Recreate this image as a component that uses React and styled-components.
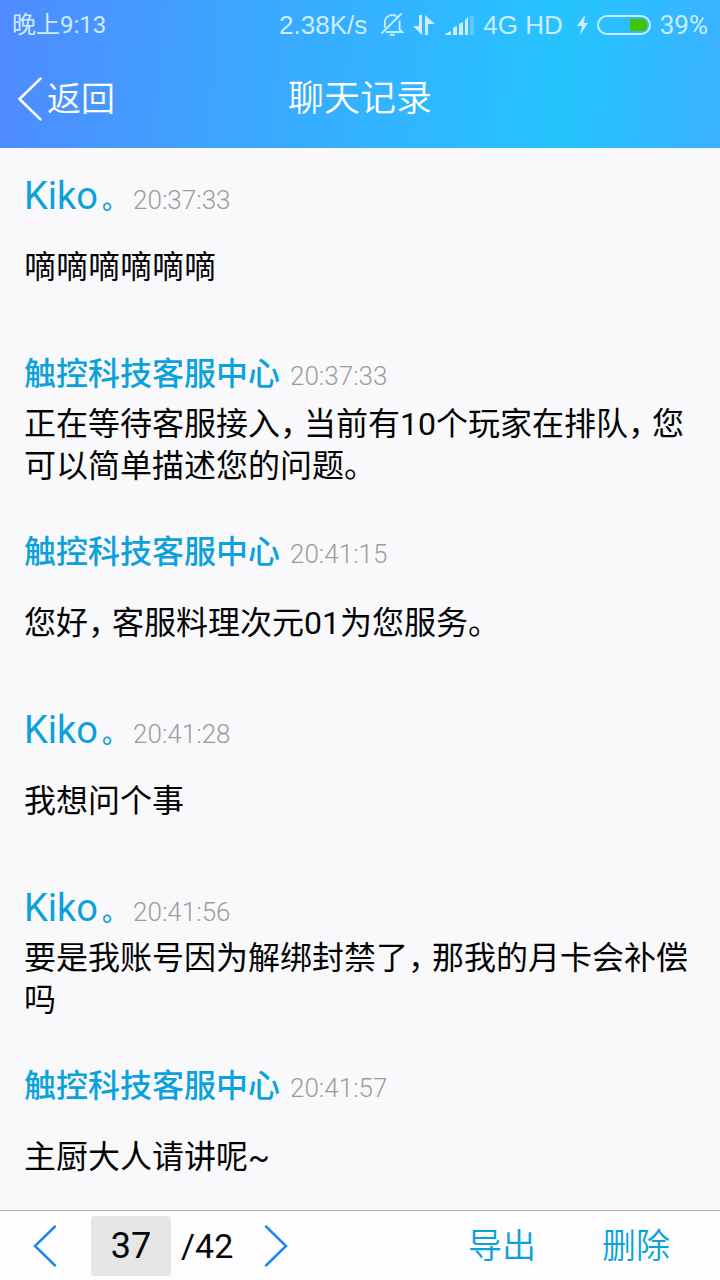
import React, { useState } from 'react'
import styled, { createGlobalStyle } from 'styled-components'

const colors = {
    background: '#f9f9fc',
    footer: '#fdfdfe',
    name: '#0ba2dc',
    time: '#9c9c9f',
    text: '#050505',
    status: '#cdecff',
    arrow: '#2583f5',
    line: '#b4b4b6',
    field: '#e6e6e6',
}

const GlobalStyle = createGlobalStyle`
    * {
        box-sizing: border-box;
    }
    body {
        margin: 0;
        background: ${colors.background};
        color: ${colors.text};
        font-family: Roboto, 'Noto Sans CJK SC', sans-serif;
    }
    button, input {
        font-family: inherit;
        border: none;
        padding: 0;
        margin: 0;
    }
    button {
        background: none;
        cursor: pointer;
    }
    svg {
        display: block;
    }
`

const Page = styled.div`
    display: flex;
    flex-direction: column;
    min-height: 100vh;
`

const Header = styled.header`
    background: linear-gradient(95deg, #508aff 0%, #3ca6ff 33%, #25c4ff 78%, #3ab1ff 100%);
    color: #fff;
`

const StatusBar = styled.div`
    display: flex;
    align-items: center;
    justify-content: space-between;
    height: 50px;
    padding: 0 12px;
    color: ${colors.status};
`

const StatusGroup = styled.div`
    display: flex;
    align-items: center;
    gap: 9px;
`

const StatusText = styled.span`
    font-size: ${props => props.$size || 24}px;
    line-height: 32px;
    white-space: nowrap;
`

const NetworkText = styled(StatusText)`
    margin-right: 4px;
    font-family: 'Liberation Sans', sans-serif;
`

const TitleBar = styled.div`
    display: grid;
    grid-template-columns: 1fr auto 1fr;
    align-items: center;
    height: 98px;
    padding: 0 17px;
`

const Back = styled.button`
    display: flex;
    align-items: center;
    justify-self: start;
    gap: 4px;
    color: #fff;
    font-size: 34px;
    font-weight: 350;
    line-height: 44px;
`

const Title = styled.h1`
    margin: 0;
    font-size: 36px;
    font-weight: 350;
    line-height: 44px;
`

const Records = styled.main`
    display: flex;
    flex-direction: column;
    flex: 1;
    gap: 44px;
    padding: 27px 16px 8px 24px;
`

const Record = styled.article`
    display: flex;
    flex-direction: column;
    gap: 8px;
`

const RecordHead = styled.div`
    display: flex;
    align-items: baseline;
    gap: 10px;
    height: 42px;
    line-height: 42px;
`

const Name = styled.h2`
    margin: 0;
    color: ${colors.name};
    font-size: 32px;
    font-weight: 500;
`

const Latin = styled.span`
    font-size: 38px;
    font-weight: 400;
`

const Stop = styled.span`
    margin: 0 8px 0 4px;
    font-size: 26px;
    font-feature-settings: 'halt';
`

const Time = styled.time`
    color: ${colors.time};
    font-size: 26px;
    font-weight: 300;
`

const Body = styled.div`
    display: flex;
    align-items: center;
    min-height: 84px;
`

const Message = styled.p`
    margin: 0;
    font-size: 32px;
    line-height: 42px;
`

const Comma = styled.span`
    margin-right: 8px;
    font-feature-settings: 'halt';
`

const Footer = styled.footer`
    display: flex;
    align-items: center;
    justify-content: space-between;
    position: sticky;
    bottom: 0;
    height: 70px;
    padding: 0 50px 0 32px;
    border-top: 1px solid ${colors.line};
    background: ${colors.footer};
`

const Pager = styled.nav`
    display: flex;
    align-items: center;
`

const PageInput = styled.input`
    width: 80px;
    height: 60px;
    margin: 0 10px 0 33px;
    border-radius: 4px;
    background: ${colors.field};
    color: ${colors.text};
    font-size: 36px;
    text-align: center;
    outline: none;
`

const PageTotal = styled.span`
    margin-right: 30px;
    font-size: 34px;
`

const Actions = styled.div`
    display: flex;
    gap: 66px;
`

const Action = styled.button`
    color: ${colors.name};
    font-size: 34px;
    font-weight: 350;
    line-height: 44px;
`

const records = [
    { id: 1, latin: 'Kiko', time: '20:37:33', text: '嘀嘀嘀嘀嘀嘀' },
    { id: 2, name: '触控科技客服中心', time: '20:37:33', text: '正在等待客服接入，当前有10个玩家在排队，您可以简单描述您的问题。' },
    { id: 3, name: '触控科技客服中心', time: '20:41:15', text: '您好，客服料理次元01为您服务。' },
    { id: 4, latin: 'Kiko', time: '20:41:28', text: '我想问个事' },
    { id: 5, latin: 'Kiko', time: '20:41:56', text: '要是我账号因为解绑封禁了，那我的月卡会补偿吗' },
    { id: 6, name: '触控科技客服中心', time: '20:41:57', text: '主厨大人请讲呢~' },
]

const BellOff = () => (
    <svg width="24" height="26" viewBox="0 0 24 26" fill="none" stroke="currentColor" strokeWidth="1.8">
        <path d="M4.800 16V10.500a7.400 7.400 0 0 1 12.200-5.700M19.600 8.500v9l2.600 2.500H6" />
        <path d="M1.500 21.500L21.500 1.500" />
        <path d="M9.500 22.800h5.500" />
    </svg>
)

const DataArrows = () => (
    <svg width="22" height="22" viewBox="0 0 22 22" fill="currentColor">
        <path d="M6 1h3v20L0 12h6z" />
        <path d="M12 1l10 9h-7v11h-3z" />
    </svg>
)

const Signal = () => (
    <svg width="30" height="20" viewBox="0 0 30 20" fill="currentColor">
        <path d="M1 20v-1l6-3v4zM9 20v-7l4-2v9zM15 20V9l4-2v13zM21 20V5l3-3v18z" />
        <path d="M26 20V1l4-1v20z" opacity="0.3" />
    </svg>
)

const Bolt = () => (
    <svg width="12" height="20" viewBox="0 0 12 20" fill="currentColor">
        <path d="M9 0L1 11h5L4 20l8-12H8z" />
    </svg>
)

const Battery = () => (
    <svg width="54" height="20" viewBox="0 0 54 20">
        <rect x="1" y="1" width="52" height="18" rx="9" fill="none" stroke="currentColor" strokeWidth="2" />
        <path d="M33 4h13a4 6 0 0 1 0 12H33z" fill="#44c400" />
    </svg>
)

const Chevron = ({ width, height, right }) => (
    <svg width={width} height={height} viewBox="0 0 24 42" fill="none" stroke="currentColor" strokeWidth="2.500" strokeLinecap="round">
        <path d={right ? 'M2 1.500L22 21L2 40.500' : 'M22 1.500L2 21L22 40.500'} />
    </svg>
)

const Arrow = styled.button`
    color: ${colors.arrow};
`

const MessageText = ({ text }) => (
    <Message>
        {text.split('，').map((part, i) => (
            <React.Fragment key={i}>
                {i > 0 && <Comma>，</Comma>}
                {part}
            </React.Fragment>
        ))}
    </Message>
)

const App = () => {
    const [page, setPage] = useState(37)
    const total = 42

    return (
        <Page>
            <GlobalStyle />
            <Header>
                <StatusBar>
                    <StatusText>晚上9:13</StatusText>
                    <StatusGroup>
                        <NetworkText $size={26}>2.38K/s</NetworkText>
                        <BellOff />
                        <DataArrows />
                        <Signal />
                        <NetworkText $size={26}>4G HD</NetworkText>
                        <Bolt />
                        <Battery />
                        <StatusText $size={26}>39%</StatusText>
                    </StatusGroup>
                </StatusBar>
                <TitleBar>
                    <Back>
                        <Chevron width={26} height={44} />
                        返回
                    </Back>
                    <Title>聊天记录</Title>
                </TitleBar>
            </Header>
            <Records>
                {records.map(record => (
                    <Record key={record.id}>
                        <RecordHead>
                            {record.latin ? (
                                <Name><Latin>{record.latin}</Latin><Stop>。</Stop></Name>
                            ) : (
                                <Name>{record.name}</Name>
                            )}
                            <Time>{record.time}</Time>
                        </RecordHead>
                        <Body>
                            <MessageText text={record.text} />
                        </Body>
                    </Record>
                ))}
            </Records>
            <Footer>
                <Pager>
                    <Arrow aria-label="上一页" onClick={() => setPage(Math.max(1, Number(page) - 1))}>
                        <Chevron width={26} height={42} />
                    </Arrow>
                    <PageInput aria-label="页码" value={page} onChange={e => setPage(e.target.value)} />
                    <PageTotal>/{total}</PageTotal>
                    <Arrow aria-label="下一页" onClick={() => setPage(Math.min(total, Number(page) + 1))}>
                        <Chevron width={26} height={42} right />
                    </Arrow>
                </Pager>
                <Actions>
                    <Action>导出</Action>
                    <Action>删除</Action>
                </Actions>
            </Footer>
        </Page>
    )
}

export default App
